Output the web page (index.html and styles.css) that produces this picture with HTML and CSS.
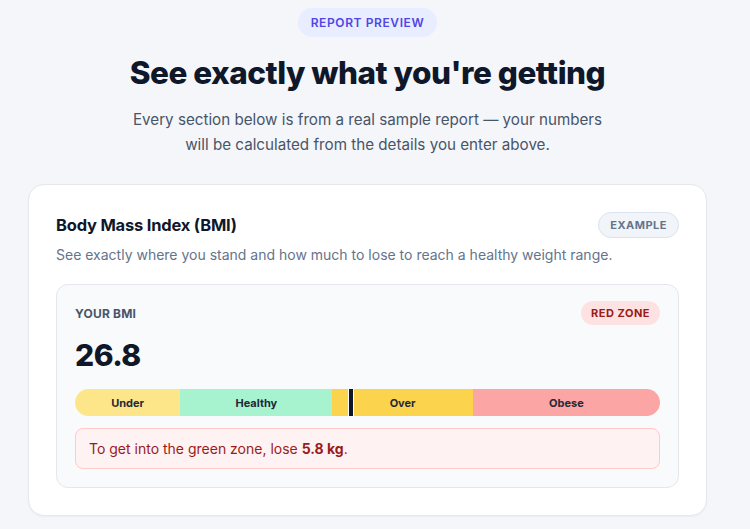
FILE: index.html
```html
<!DOCTYPE html>
<html lang="en">
<head>
    <meta charset="UTF-8">
    <meta name="viewport" content="width=device-width, initial-scale=1.0">
    <title>Report Preview</title>
    <link rel="stylesheet" href="styles.css">
</head>
<body>

    <section class="preview">
        <span class="eyebrow">REPORT PREVIEW</span>
        <h1 class="preview-title">See exactly what you're getting</h1>
        <p class="preview-lead">Every section below is from a real sample report — your numbers will be calculated from the details you enter above.</p>

        <div class="card">
            <div class="card-head">
                <h2 class="card-title">Body Mass Index (BMI)</h2>
                <span class="tag">EXAMPLE</span>
            </div>
            <p class="card-sub">See exactly where you stand and how much to lose to reach a healthy weight range.</p>

            <div class="bmi-box">
                <div class="bmi-head">
                    <span class="bmi-label">YOUR BMI</span>
                    <span class="zone">RED ZONE</span>
                </div>
                <div class="bmi-value">26.8</div>

                <div class="scale">
                    <div class="seg seg-under" style="width: 18%">Under</div>
                    <div class="seg seg-healthy" style="width: 26%">Healthy</div>
                    <div class="seg seg-over" style="width: 24%">Over</div>
                    <div class="seg seg-obese" style="width: 32%">Obese</div>
                    <span class="marker" style="left: 47.2%"></span>
                </div>

                <div class="alert">To get into the green zone, lose <strong>5.8 kg</strong>.</div>
            </div>
        </div>
    </section>

</body>
</html>
```

FILE: styles.css
```css
* {
    margin: 0;
    padding: 0;
    box-sizing: border-box;
}

body {
    font-family: 'Inter', 'Noto Sans', sans-serif;
    background: #f5f6fa;
    color: #0f172a;
    width: 735px;
    height: 529px;
    overflow: hidden;
}

.preview {
    display: flex;
    flex-direction: column;
    align-items: center;
    padding-top: 8px;
}

.eyebrow {
    background: #e8edff;
    color: #4f46e5;
    font-size: 12px;
    font-weight: 600;
    letter-spacing: 0.6px;
    padding: 0 13px;
    height: 29px;
    line-height: 29px;
    border-radius: 999px;
}

.preview-title {
    font-size: 31.5px;
    font-weight: 800;
    letter-spacing: -0.5px;
    margin-top: 18px;
    line-height: 36px;
}

.preview-lead {
    width: 480px;
    text-align: center;
    font-size: 15.2px;
    line-height: 25px;
    color: #475569;
    margin-top: 16px;
}

.card {
    width: 679px;
    margin-top: 27px;
    background: #fff;
    border: 1px solid #e5e7eb;
    border-radius: 16px;
    padding: 27px;
    box-shadow: 0 1px 2px rgba(15, 23, 42, 0.04);
}

.card-head {
    display: flex;
    justify-content: space-between;
    align-items: center;
}

.card-title {
    font-size: 16.5px;
    font-weight: 700;
    letter-spacing: -0.2px;
}

.tag {
    background: #f1f5f9;
    border: 1px solid #dbe3ee;
    color: #64748b;
    font-size: 11px;
    font-weight: 700;
    letter-spacing: 0.5px;
    height: 26px;
    line-height: 24px;
    padding: 0 11px;
    border-radius: 999px;
}

.card-sub {
    font-size: 14px;
    color: #64748b;
    margin-top: 8px;
}

.bmi-box {
    margin-top: 21px;
    background: #f8fafc;
    border: 1px solid #e5e7eb;
    border-radius: 12px;
    padding: 16px 18px 18px;
}

.bmi-head {
    display: flex;
    justify-content: space-between;
    align-items: center;
}

.bmi-label {
    font-size: 12px;
    font-weight: 700;
    color: #475569;
    letter-spacing: 0.2px;
}

.zone {
    background: #fee2e2;
    color: #991b1b;
    font-size: 11px;
    font-weight: 700;
    letter-spacing: 0.5px;
    height: 24px;
    line-height: 24px;
    padding: 0 10px;
    border-radius: 999px;
}

.bmi-value {
    font-size: 30px;
    font-weight: 800;
    letter-spacing: -0.5px;
    line-height: 36px;
    margin-top: 12px;
}

.scale {
    position: relative;
    display: flex;
    height: 27px;
    margin-top: 16px;
    border-radius: 999px;
    overflow: hidden;
}

.seg {
    display: flex;
    align-items: center;
    justify-content: center;
    font-size: 11px;
    font-weight: 700;
    color: #1f2937;
}

.seg-under { background: #fde68a; }
.seg-healthy { background: #a7f3d0; }
.seg-over { background: #fcd34d; }
.seg-obese { background: #fca5a5; }

.marker {
    position: absolute;
    top: 0;
    bottom: 0;
    width: 6px;
    margin-left: -3px;
    background: #0f172a;
    border-left: 1.5px solid #fff;
    border-right: 1.5px solid #fff;
}

.alert {
    margin-top: 12px;
    background: #fef2f2;
    border: 1px solid #fecaca;
    border-radius: 8px;
    padding: 10px 13px;
    font-size: 14px;
    line-height: 19px;
    color: #991b1b;
}

.alert strong {
    font-weight: 700;
}
```
